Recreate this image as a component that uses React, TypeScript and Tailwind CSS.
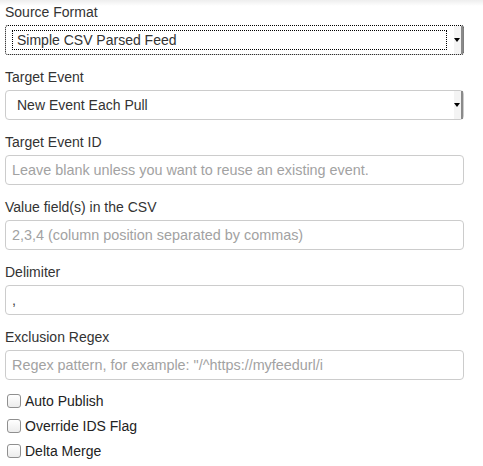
const Arrow = () => (
  <div className="w-[9px] self-stretch flex items-center justify-center border-r-2 border-[#8a8a8a] bg-[#f4f4f4]">
    <div className="w-0 h-0 border-l-[3px] border-r-[3px] border-t-[4px] border-l-transparent border-r-transparent border-t-black mr-[1px]" />
  </div>
)

const FakeSelect = ({ value, focused }: { value: string; focused?: boolean }) => (
  <div
    className={
      focused
        ? "h-[30px] flex items-stretch border border-dotted border-black rounded-[3px] bg-white"
        : "h-[30px] flex items-stretch border border-[#cccccc] rounded-[4px] bg-white"
    }
  >
    <div className="flex-1 flex items-center py-[4px] pl-[6px] pr-[7px]">
      <div
        className={
          focused
            ? "flex-1 h-full flex items-center border border-dotted border-black pl-[4px]"
            : "flex-1 h-full flex items-center pl-[5px]"
        }
      >
        {value}
      </div>
    </div>
    <Arrow />
  </div>
)

const TextInput = ({ placeholder, value }: { placeholder?: string; value?: string }) => (
  <input
    type="text"
    placeholder={placeholder}
    defaultValue={value}
    className="w-full h-[30px] border border-[#cccccc] rounded-[4px] px-[6px] text-[14.4px] text-[#444] placeholder:text-[#a2a2a2] outline-none"
  />
)

const Field = ({ label, children }: { label: string; children: React.ReactNode }) => (
  <div className="mb-[12px]">
    <label className="block leading-[20px] mb-[3px]">{label}</label>
    {children}
  </div>
)

const App = () => {
  const checks = ["Auto Publish", "Override IDS Flag", "Delta Merge"]

  return (
    <div className="w-[483px] h-[466px] bg-white relative text-[14px] text-[#333] font-['Liberation_Sans',Arial,sans-serif]">
      <div className="absolute top-0 left-0 w-full h-[6px] bg-gradient-to-b from-[#eeeeee] to-white" />
      <div className="relative pt-[2px] pl-[5px] w-[464px]">
        <Field label="Source Format">
          <FakeSelect value="Simple CSV Parsed Feed" focused />
        </Field>
        <Field label="Target Event">
          <FakeSelect value="New Event Each Pull" />
        </Field>
        <Field label="Target Event ID">
          <TextInput placeholder="Leave blank unless you want to reuse an existing event." />
        </Field>
        <Field label="Value field(s) in the CSV">
          <TextInput placeholder="2,3,4 (column position separated by commas)" />
        </Field>
        <Field label="Delimiter">
          <TextInput value="," />
        </Field>
        <Field label="Exclusion Regex">
          <TextInput placeholder={'Regex pattern, for example: "/^https://myfeedurl/i'} />
        </Field>

        <div className="flex flex-col gap-[5px] -mt-[1px]">
          {checks.map(c => (
            <label key={c} className="flex items-center leading-[20px] text-[#222]">
              <span className="w-[14px] h-[14px] ml-[2px] mr-[4px] border border-[#8f8f8f] rounded-[3px] bg-gradient-to-b from-white to-[#ececec]" />
              {c}
            </label>
          ))}
        </div>
      </div>
    </div>
  )
}

export default App
